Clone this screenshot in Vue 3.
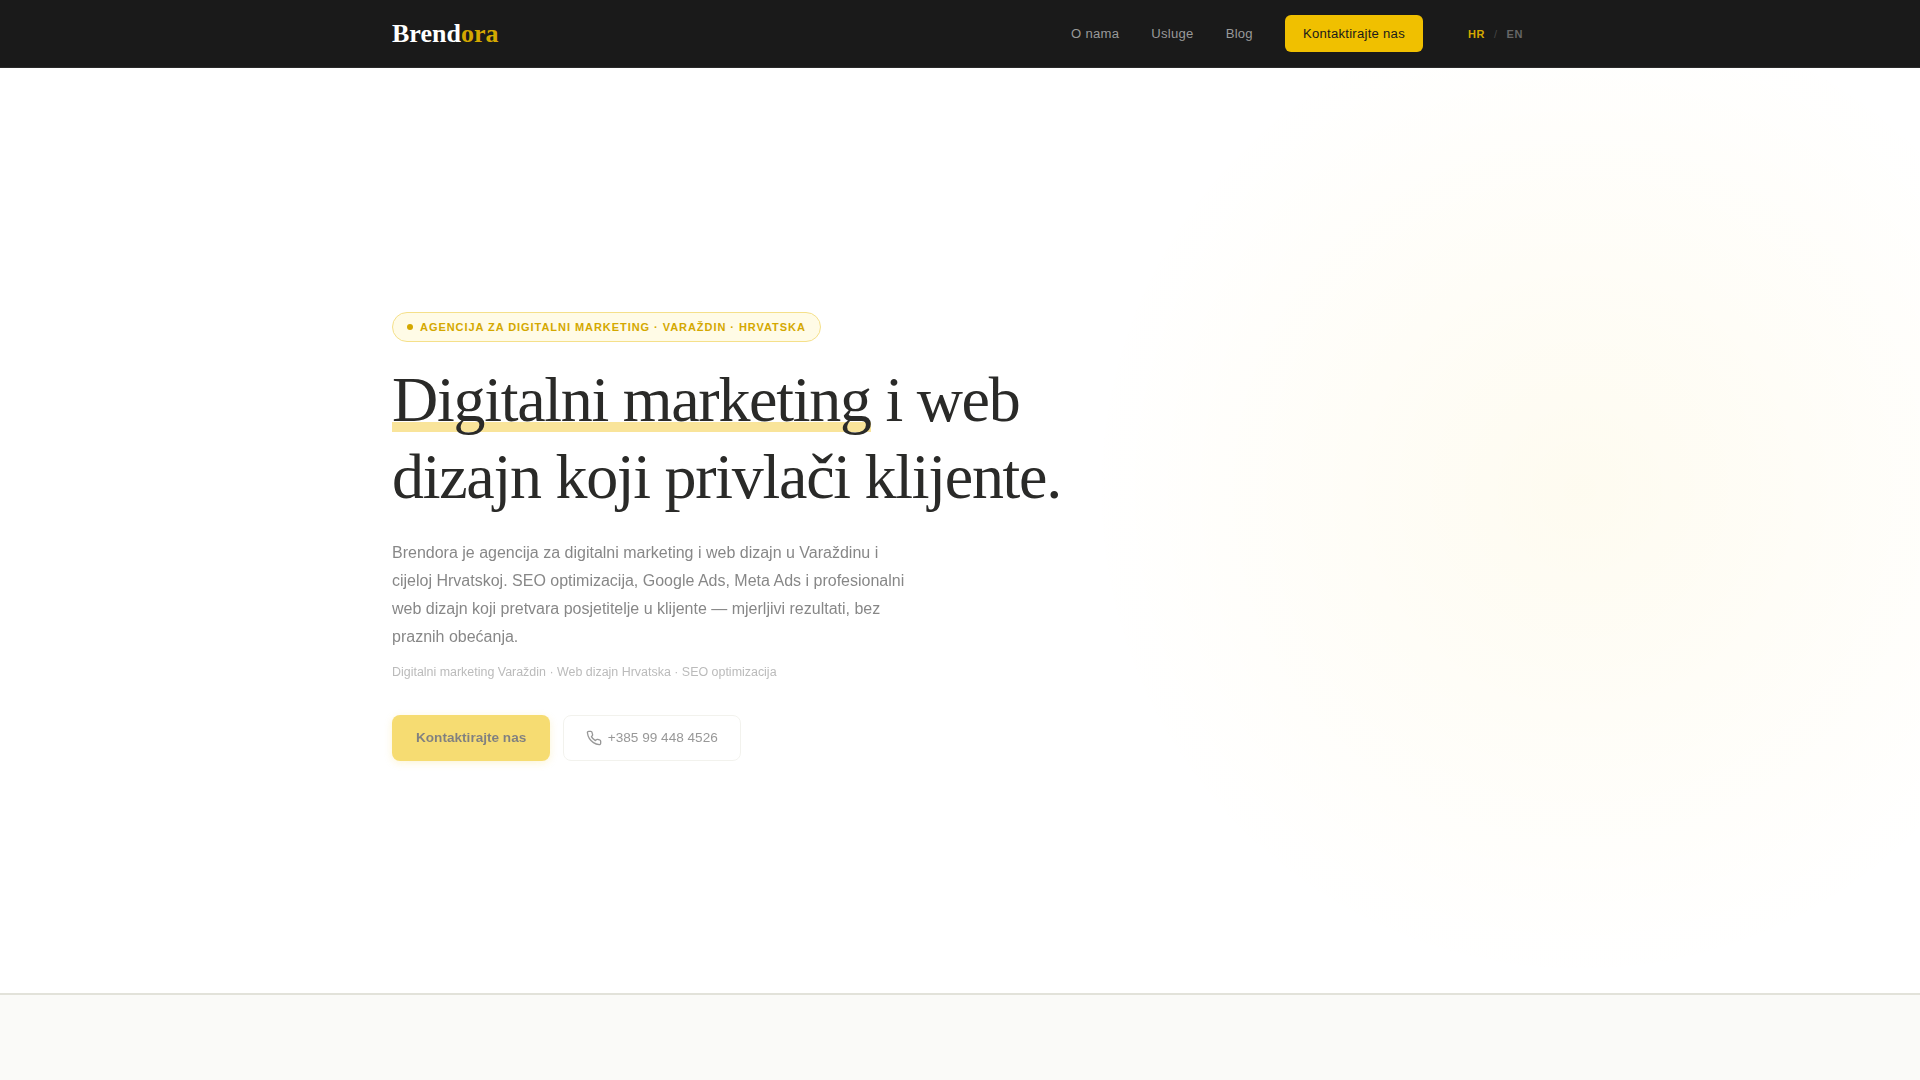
<template>
  <div class="page">
    <nav class="nav">
      <div class="nav-inner">
        <a class="logo">Brend<span>ora</span></a>
        <div class="nav-right">
          <a class="nav-link">O nama</a>
          <a class="nav-link">Usluge</a>
          <a class="nav-link">Blog</a>
          <a class="nav-cta">Kontaktirajte nas</a>
          <div class="lang">
            <span class="lang-on">HR</span>
            <span class="lang-sep">/</span>
            <span class="lang-off">EN</span>
          </div>
        </div>
      </div>
    </nav>
    <section class="hero">
      <div class="glow"></div>
      <div class="hero-inner">
        <div class="badge"><i class="dot"></i>AGENCIJA ZA DIGITALNI MARKETING · VARAŽDIN · HRVATSKA</div>
        <h1 class="title"><span class="mark">Digitalni marketing</span> i web<br>dizajn koji privlači klijente.</h1>
        <p class="lead">Brendora je agencija za digitalni marketing i web dizajn u Varaždinu i cijeloj Hrvatskoj. SEO optimizacija, Google Ads, Meta Ads i profesionalni web dizajn koji pretvara posjetitelje u klijente — mjerljivi rezultati, bez praznih obećanja.</p>
        <p class="keywords">Digitalni marketing Varaždin · Web dizajn Hrvatska · SEO optimizacija</p>
        <div class="actions">
          <a class="btn-main">Kontaktirajte nas</a>
          <a class="btn-phone">
            <svg width="16" height="16" viewBox="0 0 24 24" fill="none" stroke="currentColor" stroke-width="2" stroke-linecap="round" stroke-linejoin="round"><path d="M22 16.92v3a2 2 0 0 1-2.18 2 19.79 19.79 0 0 1-8.63-3.07 19.5 19.5 0 0 1-6-6 19.79 19.79 0 0 1-3.07-8.67A2 2 0 0 1 4.11 2h3a2 2 0 0 1 2 1.72c.13.96.36 1.9.7 2.81a2 2 0 0 1-.45 2.11L8.09 9.91a16 16 0 0 0 6 6l1.27-1.27a2 2 0 0 1 2.11-.45c.91.34 1.85.57 2.81.7A2 2 0 0 1 22 16.92z"/></svg>
            +385 99 448 4526
          </a>
        </div>
      </div>
    </section>
    <section class="next"></section>
  </div>
</template>
<script setup>
</script>
<style>
html, body { margin: 0; background: #fff; overflow: hidden; }
</style>
<style scoped>
.page {
  height: 1080px;
  overflow: hidden;
  font-family: "Liberation Sans", Arial, sans-serif;
}

.nav {
  height: 68px;
  box-sizing: border-box;
  background: #1a1a1a;
  border-bottom: 1px solid #2a2a2a;
}

.nav-inner {
  width: 1136px;
  height: 100%;
  margin: 0 auto;
  display: flex;
  align-items: center;
  justify-content: space-between;
}

.logo {
  font-family: "Liberation Serif", serif;
  font-size: 26px;
  font-weight: 700;
  color: #fff;
}

.logo span {
  color: #d4a800;
}

.nav-right {
  display: flex;
  align-items: center;
  margin-right: 5px;
}

.nav-link {
  font-size: 13.12px;
  letter-spacing: 0.26px;
  color: #999;
  margin-right: 32px;
}

.nav-cta {
  background: #f0c000;
  color: #1a1a1a;
  font-size: 13.12px;
  letter-spacing: 0.26px;
  padding: 11px 18px;
  line-height: 15px;
  border-radius: 6px;
}

.lang {
  display: flex;
  align-items: center;
  gap: 9px;
  margin-left: 45px;
  font-size: 11px;
  font-weight: 700;
  letter-spacing: 0.55px;
}

.lang-on {
  color: #d4a800;
}

.lang-sep {
  color: #444;
  font-weight: 400;
}

.lang-off {
  color: #666;
}

.hero {
  position: relative;
  height: 927px;
  box-sizing: border-box;
  padding-top: 244px;
  overflow: hidden;
  background: #fff;
  border-bottom: 2px solid #e2e2da;
}

.glow {
  position: absolute;
  left: 1080px;
  top: -78px;
  width: 1000px;
  height: 1000px;
  background: radial-gradient(circle, rgba(240, 192, 0, 0.06) 0%, rgba(240, 192, 0, 0) 70%);
}

.hero-inner {
  position: relative;
  width: 1136px;
  margin: 0 auto;
}

.badge {
  display: inline-flex;
  align-items: center;
  gap: 7px;
  height: 30px;
  box-sizing: border-box;
  padding: 0 14px;
  background: #fffbe6;
  border: 1px solid #f5e08a;
  border-radius: 20px;
  color: #d4a800;
  font-size: 11px;
  font-weight: 700;
  letter-spacing: 0.95px;
}

.dot {
  width: 6px;
  height: 6px;
  border-radius: 50%;
  background: #d4a800;
}

.title {
  margin: 19px 0 0;
  font-family: "Liberation Serif", serif;
  font-size: 64px;
  font-weight: 400;
  line-height: 77px;
  letter-spacing: -1.28px;
  color: #2a2a28;
}

.mark {
  background: linear-gradient(transparent calc(100% - 13px), #f9e49a calc(100% - 13px), #f9e49a calc(100% - 3px), transparent calc(100% - 3px));
}

.lead {
  width: 520px;
  margin: 24px 0 0;
  font-size: 16px;
  line-height: 28px;
  color: #777;
  opacity: 0.88;
  filter: blur(0.3px);
}

.keywords {
  margin: 12px 0 0;
  font-size: 12.45px;
  line-height: 18px;
  color: #bbb;
  filter: blur(0.3px);
}

.actions {
  display: flex;
  gap: 13px;
  margin-top: 34px;
  opacity: 0.55;
  filter: blur(0.3px);
}

.btn-main {
  display: flex;
  align-items: center;
  height: 46px;
  box-sizing: border-box;
  padding: 0 24px 1px;
  background: #f0c000;
  border-radius: 8px;
  font-size: 13.6px;
  font-weight: 700;
  color: #1a1a1a;
  box-shadow: 0 2px 8px rgba(240, 192, 0, 0.3);
}

.btn-phone {
  display: flex;
  align-items: center;
  gap: 6px;
  height: 46px;
  box-sizing: border-box;
  padding: 0 22.5px 1px 21.5px;
  background: #fff;
  border: 1px solid #e8e8e0;
  border-radius: 8px;
  font-size: 13.6px;
  color: #444;
}

.next {
  height: 85px;
  background: #fafaf8;
}
</style>
